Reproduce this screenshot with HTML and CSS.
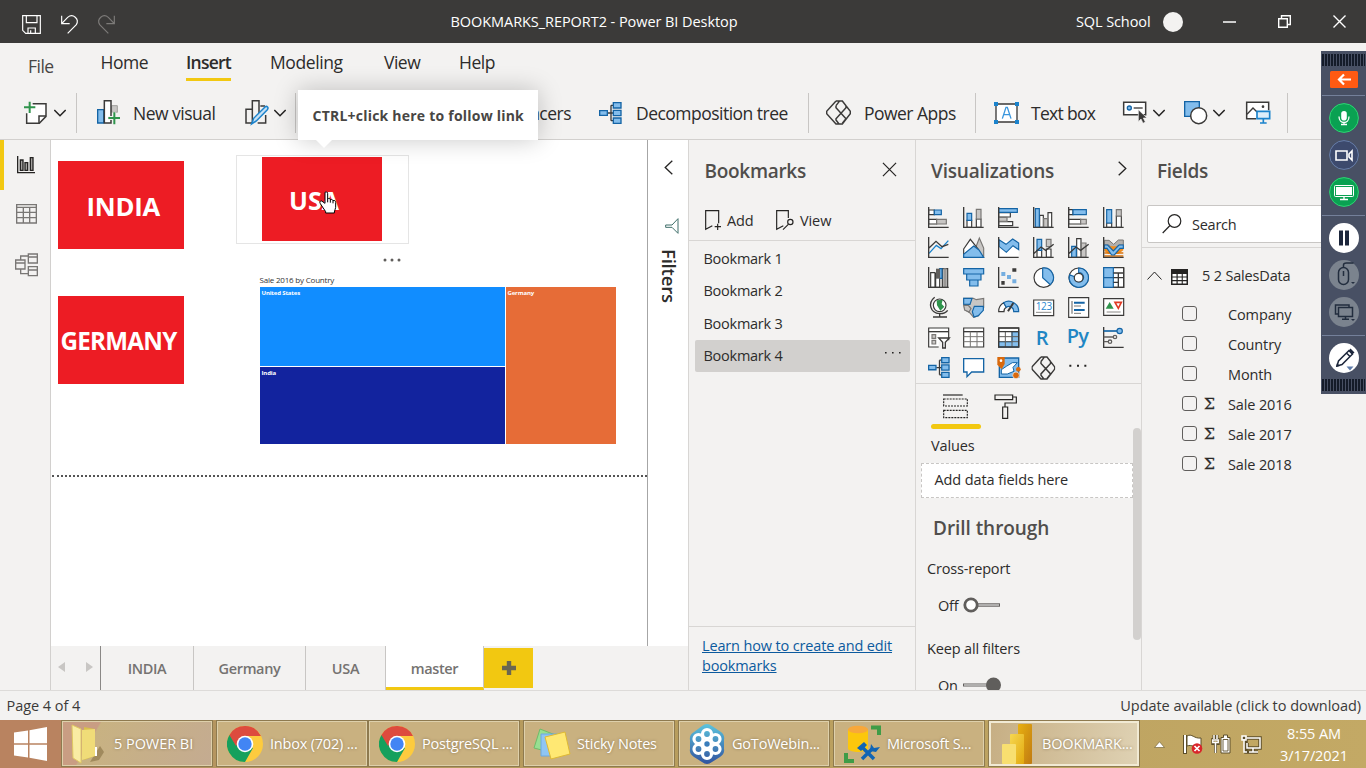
FILE: index.html
```html
<!DOCTYPE html>
<html lang="en">
<head>
<meta charset="utf-8">
<title>BOOKMARKS_REPORT2 - Power BI Desktop</title>
<link rel="stylesheet" href="styles.css">
</head>
<body>
<svg class="defs" width="0" height="0" aria-hidden="true">
  <defs>
    <symbol id="chev" viewBox="0 0 36 24"><path d="M1 3l17 17L35 3" fill="none" stroke="#252423" stroke-width="4.5"/></symbol>
    <symbol id="decomp" viewBox="0 0 69 66"><path d="M26 33h17M36 10v46M36 10h8M36 56h8" fill="none" stroke="#3b3a39" stroke-width="4"/><g fill="#83bdec" stroke="#1464a5" stroke-width="4"><path d="M2 26h23v14H2zM43 2h23v16H43zM43 25h23v16H43zM43 48h23v16H43z"/></g></symbol>
    <symbol id="papps" viewBox="0 0 75 75"><path d="M30 3L2 34v7l28 31h9M30 3h9M39 3h10l24 31v7L49 72H39M30 17v6l30 33-11 14M60 17v6L30 56v4l9 12M30 17L40 4M50 4l10 13" fill="none" stroke="#3b3a39" stroke-width="4.500"/></symbol>
    <symbol id="chrome" viewBox="0 0 36 36"><circle cx="18" cy="18" r="18" fill="#fdcb3e"/><path d="M18 18L2.4 9A18 18 0 0 0 18 36l8-14z" fill="#16a05d"/><path d="M2.4 9A18 18 0 0 1 34 10H18L9 20z" fill="#dd4b3e"/><circle cx="18" cy="18" r="8.3" fill="#fff"/><circle cx="18" cy="18" r="6.7" fill="#4285f4"/></symbol>
  </defs>
</svg>
<div class="app">
  <header class="titlebar">
    <div class="quick">
      <svg width="19" height="19" viewBox="0 0 57 57" fill="none" stroke="#fff" stroke-width="3.5"><path d="M2 2h53v53H11L2 46zM13 2v21h32V2M18 55V39h22v16M26 55V46"/></svg>
      <svg width="17" height="19" viewBox="0 0 51 57" fill="none" stroke="#fff" stroke-width="3.5"><path d="M2 2v24h24M2 26L20 7C36-6 56 12 46 29L20 55"/></svg>
      <svg width="17" height="19" viewBox="0 0 51 57" fill="none" stroke="#7d7b79" stroke-width="3.5"><path d="M49 2v24H25M49 26L31 7C15-6-5 12 5 29l26 26"/></svg>
    </div>
    <div class="title">BOOKMARKS_REPORT2 - Power BI Desktop</div>
    <div class="user">SQL School</div>
    <div class="avatar"></div>
    <svg class="wc wc-min" width="13" height="13" viewBox="0 0 13 13"><path d="M0 7h13" stroke="#fff" stroke-width="1.5"/></svg>
    <svg class="wc wc-max" width="13" height="13" viewBox="0 0 13 13" fill="none" stroke="#fff" stroke-width="1.4"><path d="M.7 3.7h8.6v8.6H.7zM3.5 3.5V.7h8.8v8.8H9.5"/></svg>
    <svg class="wc wc-close" width="13" height="13" viewBox="0 0 13 13"><path d="M.5.5l12 12M12.500.5L.5 12.5" stroke="#fff" stroke-width="1.4"/></svg>
  </header>

  <nav class="menu">
    <span class="m-file">File</span><span class="m-home">Home</span><span class="m-insert">Insert</span><span class="m-model">Modeling</span><span class="m-view">View</span><span>Help</span>
  </nav>

  <div class="ribbon">
    <svg width="24" height="24" viewBox="0 0 72 72"><path d="M26 8h40v38L46 67H8V37" fill="#fff" stroke="#3b3a39" stroke-width="4.5"/><path d="M66 45H45v22" fill="none" stroke="#3b3a39" stroke-width="4.5"/><path d="M0 19h34M17 2v34" stroke="#2f944c" stroke-width="6"/></svg>
    <svg width="12" height="8"><use href="#chev"/></svg>
    <i class="sep"></i>
    <svg width="24" height="25" viewBox="0 0 72 75"><path d="M44 17h17v20H44z" fill="#c8c6c4" stroke="#a19f9d" stroke-width="3"/><path d="M2 29h18v40H2z" fill="#83bdec" stroke="#1464a5" stroke-width="4"/><path d="M22 2h20v67H22z" fill="#fff" stroke="#3b3a39" stroke-width="4.500"/><path d="M34 54h35M52 37v36" stroke="#f3f2f1" stroke-width="12"/><path d="M34 54h35M52 37v36" stroke="#2f944c" stroke-width="6"/></svg>
    <span>New visual</span>
    <svg width="24" height="25" viewBox="0 0 72 75"><path d="M22 28H3v41h18M22 69V2h20v50M46 18h14M62 45v24H38" fill="none" stroke="#3b3a39" stroke-width="4.500"/><path d="M20 72l6-17 34-34c6-5 12 2 7 8L34 63z" fill="#c7e0f4" stroke="#1b83cc" stroke-width="4.500"/></svg>
    <svg width="12" height="8"><use href="#chev"/></svg>
    <i class="sep"></i>
    <span class="r-key">Key influencers</span>
    <svg width="23" height="22"><use href="#decomp"/></svg>
    <span>Decomposition tree</span>
    <i class="sep"></i>
    <svg width="25" height="25"><use href="#papps"/></svg>
    <span>Power Apps</span>
    <i class="sep"></i>
    <svg width="25" height="22" viewBox="0 0 75 66"><path d="M6 6h63v54H6z" fill="#fff" stroke="#3b3a39" stroke-width="4"/><path d="M25 50l11-34h4l11 34M29 38h18" fill="none" stroke="#3a96dd" stroke-width="4"/><path d="M0 0h12v12H0zM63 0h12v12H63zM0 54h12v12H0zM63 54h12v12H63z" fill="#1b83cc"/></svg>
    <span class="r-text">Text box</span>
    <svg width="24" height="23" viewBox="0 0 72 69"><path d="M2 4h66v37H2z" fill="#fff" stroke="#3b3a39" stroke-width="4.500"/><circle cx="19" cy="21" r="6" fill="#83bdec" stroke="#1464a5" stroke-width="4"/><path d="M32 21h27" stroke="#3b3a39" stroke-width="4"/><path d="M46 26v36l8-8 6 13 7-4-6-12h11z" fill="#3b3a39" stroke="#f3f2f1" stroke-width="2"/></svg>
    <svg width="12" height="8"><use href="#chev"/></svg>
    <svg width="24" height="24" viewBox="0 0 72 72"><path d="M2 2h44v44H2z" fill="#83bdec" stroke="#1464a5" stroke-width="4"/><circle cx="44" cy="44" r="24" fill="#fff" stroke="#3b3a39" stroke-width="4.500"/></svg>
    <svg width="12" height="8"><use href="#chev"/></svg>
    <svg width="25" height="23" viewBox="0 0 75 69"><path d="M30 53H2V4h66v24" fill="#fff" stroke="#3b3a39" stroke-width="4.500"/><path d="M3 40l18-19 12 12" fill="none" stroke="#3b3a39" stroke-width="4"/><circle cx="51" cy="17" r="4" fill="#3b3a39"/><path d="M33 31h38v22H33zM52 53v12M42 66h20" fill="#dceefa" stroke="#1b83cc" stroke-width="5"/></svg>
    <i class="sep"></i>
  </div>

  <main class="work">
    <aside class="rail">
      <i class="rail-mark"></i>
      <svg width="18" height="18" viewBox="0 0 54 54" fill="#a19f9d" stroke="#252423" stroke-width="4"><path d="M2 0v50h52" fill="none"/><path d="M10 12h8v31h-8zM24 20h8v23h-8zM40 5h8v38h-8z"/></svg>
      <svg width="21" height="20" viewBox="0 0 63 60" fill="none" stroke="#797775" stroke-width="4"><path d="M2 2h59v55H2zM2 10h59M2 25h59M2 41h59M22 10v47M41 10v47"/></svg>
      <svg width="23" height="24" viewBox="0 0 69 72" fill="none" stroke="#797775" stroke-width="4"><path d="M2 21h28v27H2zM2 30h28M40 3h27v27H40zM40 12h27M40 41h27v27H40zM40 51h27M17 21v-12h23M17 48v14h23"/></svg>
    </aside>

    <section class="stage">
      <div class="stage-top">
        <div class="canvas">
          <div class="tile t-india">INDIA</div>
          <div class="tile t-germany">GERMANY</div>
          <div class="frame"><div class="tile t-usa">USA</div></div>
          <svg class="more" width="18" height="4" viewBox="0 0 18 4" fill="#605e5c"><circle cx="2" cy="2" r="1.500"/><circle cx="9" cy="2" r="1.500"/><circle cx="16" cy="2" r="1.500"/></svg>
          <div class="chart">
            <div class="chart-title">Sale 2016 by Country</div>
            <div class="treemap"><div class="tm-us">United States</div><div class="tm-de">Germany</div><div class="tm-in">India</div></div>
          </div>
          <div class="fold"></div>
          <svg class="hand" width="18" height="23" viewBox="0 0 54 69"><path d="M18 4c4-3 8-1 8 4v16c3-3 7-2 8 2 4-2 7 0 8 3 5-2 8 1 8 5v15c0 6-4 9-4 14v3H20v-4L4 38c-3-4-1-9 4-8l10 7z" fill="#fff" stroke="#000" stroke-width="3"/><path d="M26 24v10M34 26v9M42 29v8" stroke="#000" stroke-width="3"/></svg>
        </div>
        <aside class="filters">
          <svg width="9" height="15" viewBox="0 0 9 15" fill="none" stroke="#252423" stroke-width="1.3"><path d="M8.300.7L1.200 7.500l7.100 6.800"/></svg>
          <svg class="funnel" width="14" height="16" viewBox="0 0 42 48" fill="none" stroke="#3f6f6a" stroke-width="3"><path d="M39 2v44L21 28H2v-7h19z"/></svg>
          <span>Filters</span>
        </aside>
      </div>
      <footer class="tabs">
        <div class="tab-nav"><svg width="7" height="10" viewBox="0 0 7 10"><path d="M7 0v10L0 5z" fill="#c8c6c4"/></svg><svg width="7" height="10" viewBox="0 0 7 10"><path d="M0 0v10l7-5z" fill="#c8c6c4"/></svg></div>
        <div class="tab w1">INDIA</div><div class="tab w2">Germany</div><div class="tab w3">USA</div><div class="tab w4 on">master</div>
        <div class="plus"><svg width="14" height="14" viewBox="0 0 14 14"><path d="M7 0v14M0 7h14" stroke="#6b6650" stroke-width="4.400"/></svg></div>
      </footer>
    </section>

    <aside class="bookmarks">
      <div class="head"><h2>Bookmarks</h2><svg width="15" height="15" viewBox="0 0 16 16"><path d="M1 1l14 14M15 1L1 15" stroke="#252423" stroke-width="1.3"/></svg></div>
      <div class="actions">
        <svg width="16" height="21" viewBox="0 0 48 63" fill="none" stroke="#252423" stroke-width="3.500"><path d="M41 40V2H2v56l20-11M29 50h19M38 41v19"/></svg><span class="a-add">Add</span>
        <svg width="18" height="21" viewBox="0 0 54 63" fill="none" stroke="#252423" stroke-width="3.500"><path d="M37 24V2H2v56l20-11M21 59l16-16"/><circle cx="43" cy="36" r="8"/></svg><span>View</span>
      </div>
      <ul>
        <li>Bookmark 1</li><li>Bookmark 2</li><li>Bookmark 3</li>
        <li class="sel">Bookmark 4<svg width="16" height="2" viewBox="0 0 16 2" fill="#252423"><path d="M0 0h1.600v1.600H0zM7 0h1.600v1.600H7zM14 0h1.600v1.600H14z"/></svg></li>
      </ul>
      <div class="learn"><a>Learn how to create and edit<br>bookmarks</a></div>
    </aside>

    <aside class="viz">
      <div class="head"><h2>Visualizations</h2><svg width="9" height="15" viewBox="0 0 9 15" fill="none" stroke="#252423" stroke-width="1.300"><path d="M.7.700l7.100 6.800L.7 14.300"/></svg></div>
      <div class="icons">
        <svg viewBox="0 0 66 66"><path class="w" d="M2 9h17v14H2zM2 37h24v14H2z"/><path class="b" d="M19 9h21v14H19z"/><path class="g" d="M26 37h29v14H26z"/><path class="ax" d="M2 0v61h60"/></svg>
        <svg viewBox="0 0 66 66"><path class="w" d="M12 40h14v21H12zM40 36h14v25H40z"/><path class="b" d="M12 19h14v21H12z"/><path class="g" d="M40 7h14v29H40z"/><path class="ax" d="M2 0v61h60"/></svg>
        <svg viewBox="0 0 66 66"><path class="w" d="M2 17h35v13H2zM2 44h42v12H2z"/><path class="g" d="M2 31h25v12H2z"/><path class="b" d="M2 5h56v11H2z"/><path class="ax" d="M2 0v61h60"/></svg>
        <svg viewBox="0 0 66 66"><path class="w" d="M20 25h11v36H20zM45 17h11v44H45z"/><path class="g" d="M32 35h12v26H32z"/><path class="b" d="M7 5h12v56H7z"/><path class="ax" d="M2 0v61h60"/></svg>
        <svg viewBox="0 0 66 66"><path class="w" d="M2 8h13v15H2zM2 37h36v14H2z"/><path class="b" d="M15 8h40v15H15z"/><path class="g" d="M38 37h17v14H38z"/><path class="ax" d="M2 0v61h60"/></svg>
        <svg viewBox="0 0 66 66"><path class="w" d="M11 48h15v13H11zM40 27h15v34H40z"/><path class="b" d="M11 8h15v40H11z"/><path class="g" d="M40 8h15v19H40z"/><path class="ax" d="M2 0v61h60"/></svg>

        <svg viewBox="0 0 66 66"><path class="bl" d="M3 49l22-24 14 10 22-24"/><path class="ax" d="M3 33l21-20 18 16 19-7M2 0v61h60"/></svg>
        <svg viewBox="0 0 66 66"><path class="g" d="M27 61L49 3l13 30v28z"/><path class="w" d="M2 36L22 7l24 30-18 24H2z"/><path class="b" d="M2 61V52l30-25 16 12 14 22z"/></svg>
        <svg viewBox="0 0 66 66"><path d="M3 8v53h59V20z" fill="#fff"/><path class="b" d="M3 8l21 14L44 6l18 12v20L45 26 25 46 3 28z"/><path class="ax" d="M2 0v61h60"/></svg>
        <svg viewBox="0 0 66 66"><path class="w" d="M12 40h14v21H12zM40 36h14v25H40z"/><path class="b" d="M12 7h14v33H12z"/><path class="g" d="M40 7h14v22H40z"/><path class="ax" d="M2 50l22-20 14 10 24-18M2 0v61h60"/></svg>
        <svg viewBox="0 0 66 66"><path class="w" d="M26 5h13v56H26z"/><path class="b" d="M11 28h14v33H11z"/><path class="g" d="M40 18h14v43H40z"/><path class="ax" d="M2 50l22-20 14 10 24-18M2 0v61h60"/></svg>
        <svg viewBox="0 0 66 66"><path d="M4 10h14l14 12 14-13h15v15H49L32 35 16 24H4z" fill="#b3b0ad" stroke="#797775" stroke-width="3"/><path d="M4 28h57v12L46 51H16L4 42z" fill="#f08c1e"/><path d="M4 48h57M4 57h57" stroke="#d9730d" stroke-width="5"/><path class="b" d="M4 24h10l17 18 17-18h13v10H51L34 54h-8L12 34H4z"/><path class="ax" d="M2 0v61h60"/></svg>

        <svg viewBox="0 0 66 66"><path class="w" d="M8 17h13v44H8zM23 20h12v41H23zM43 5h16v56H43z"/><path class="b" d="M35 5h7v29h-7z"/><path d="M24 5h12v30H24z" fill="#605e5c"/><path class="g" d="M48 5h6v56h-6z"/><path class="ax" d="M2 0v61h60"/></svg>
        <svg viewBox="0 0 66 66"><path class="b" d="M2 5h60v16H2zM11 21h43v18H11zM20 39h25v18H20z"/></svg>
        <svg viewBox="0 0 66 66"><path d="M10 15h12v12H10zM27 24h12v12H27zM43 37h12v12H43z" fill="#75aee0"/><path d="M43 4h12v10H43zM10 42h10v11H10z" fill="#3b3a39"/><path class="ax" d="M2 0v61h60"/></svg>
        <svg viewBox="0 0 66 66"><circle class="w" cx="32" cy="32" r="29"/><path class="b" d="M29 3a29 29 0 0 1 23 50L29 32z"/></svg>
        <svg viewBox="0 0 66 66"><circle class="w" cx="32" cy="32" r="29"/><path class="b" fill-rule="evenodd" d="M32 3a29 29 0 1 1-27 20l14 6a14 14 0 1 0 13-12z"/><circle class="w" cx="32" cy="32" r="13"/></svg>
        <svg viewBox="0 0 66 66"><path class="w" d="M2 2h60v59H2z"/><path class="b" d="M2 2h29v30H2zM2 32h29v29H2z"/><path class="ax" d="M31 18h31M31 32h31M31 46h15M46 18v43M31 61H62V2"/></svg>

        <svg viewBox="0 0 66 66"><circle class="w" cx="35" cy="25" r="19"/><path d="M26 10l18-2-3 13 8 8-12 12-10-16z" fill="#2f944c"/><path class="ax" d="M20 1C-1 18 6 48 35 50c12 0 20-4 24-10M35 50v10M15 60h42"/></svg>
        <svg viewBox="0 0 66 66"><path class="g" d="M2 4h29l9 4 22-4v28L46 56l-14 5-12-14L5 37z"/><path class="b" d="M2 4h25l-6 18L2 22zM34 28h27v12L46 56 33 60l-5-16z"/><path class="g" d="M2 25h14l8 10-6 10L5 39z"/></svg>
        <svg viewBox="0 0 66 66"><path class="w" d="M2 44a30 30 0 0 1 15-27l8 14a14 14 0 0 0-7 13z"/><path class="b" d="M17 17a30 30 0 0 1 45 27H47a14 14 0 0 0-22-13z"/><path d="M46 18L30 43" stroke="#3b3a39" stroke-width="6"/></svg>
        <svg viewBox="0 0 66 66"><path class="w" d="M2 9h60v47H2z"/><path d="M9 46h46" stroke="#8a8886" stroke-width="3"/><text class="num" x="8" y="40">123</text></svg>
        <svg viewBox="0 0 66 66"><path class="w" d="M2 2h60v59H2z"/><path class="g" d="M12 12v38"/><path d="M18 17h32M18 39h32" stroke="#1464a5" stroke-width="6"/><path d="M18 27h21M18 49h21" stroke="#797775" stroke-width="3"/></svg>
        <svg viewBox="0 0 66 66"><path class="w" d="M2 5h60v50H2z"/><path d="M8 35L20 15l12 20z" fill="#2f944c"/><path d="M36 16h19L46 34z" fill="none" stroke="#e03b24" stroke-width="5"/><path d="M11 45h42" stroke="#8a8886" stroke-width="3"/></svg>

        <svg viewBox="0 0 66 66"><path class="w" d="M2 3h60v57H2z"/><path class="ax" d="M2 14h60"/><path class="g" d="M12 23h11v11H12zM12 40h11v11H12z"/><path d="M60 40h6v26H32V44z" fill="#f3f2f1"/><path d="M32 33h32L52 46v17h-8V46z" fill="#fff" stroke="#3b3a39" stroke-width="4"/></svg>
        <svg viewBox="0 0 66 66"><path class="w" d="M2 3h60v57H2z"/><path class="ax" d="M2 14h60"/><path d="M2 29h60M2 44h60M22 14v46M42 14v46" stroke="#797775" stroke-width="3"/></svg>
        <svg viewBox="0 0 66 66"><path class="w" d="M2 3h60v57H2z"/><path class="b" d="M42 14h20v46H2V44h40z"/><path d="M2 29h60M2 44h60M22 14v46M42 14v46" stroke="#605e5c" stroke-width="3"/><path class="ax" d="M2 14h60M2 3h60v57H2z" /></svg>
        <svg viewBox="0 0 66 66"><text class="rpy" x="8" y="53">R</text></svg>
        <svg viewBox="0 0 66 66"><text class="rpy" x="-4" y="48">Py</text></svg>
        <svg viewBox="0 0 66 66"><path class="ax" d="M2 0v61h60"/><path d="M2 12h41" stroke="#1464a5" stroke-width="5"/><path d="M2 30h28M2 44h15" stroke="#605e5c" stroke-width="4"/><circle class="b" cx="50" cy="12" r="8"/><g fill="#fff" stroke="#605e5c" stroke-width="4"><circle cx="36" cy="30" r="5"/><circle cx="21" cy="44" r="5"/></g></svg>

        <svg viewBox="0 0 69 69"><use href="#decomp" width="69" height="66"/></svg>
        <svg viewBox="0 0 66 66"><path d="M2 5h60v40H26L12 59V45H2z" fill="#fff" stroke="#1464a5" stroke-width="4"/></svg>
        <svg viewBox="0 0 66 66"><path d="M4 3h58v58H4z" fill="#83bdec" stroke="#1464a5" stroke-width="4"/><path d="M25 28l18-11 15 0-13 14 3 12-20 8H10V38z" fill="#fff" stroke="#1464a5" stroke-width="3"/><path d="M-2 0h22v21L11 37-2 23z" fill="#d9690c"/><circle cx="9" cy="11" r="4" fill="#fff"/><circle cx="54" cy="55" r="10" fill="#d9690c" stroke="#f3f2f1" stroke-width="2"/><circle cx="61" cy="37" r="7" fill="#d9690c"/></svg>
        <svg viewBox="5 3 69 69"><use href="#papps" width="75" height="75"/></svg>
        <svg viewBox="0 0 66 66"><path d="M4 23h6v6H4zM27 23h6v6h-6zM49 23h6v6h-6z" fill="#252423"/></svg>
      </div>
      <div class="format">
        <div class="f-tabs">
          <svg width="25" height="26" viewBox="0 0 75 78" fill="none" stroke="#252423" stroke-width="3.500"><path d="M0 3h59"/><path d="M2 15h71v21H2zM2 49h71v22H2z" stroke-dasharray="6 3"/></svg>
          <svg width="24" height="26" viewBox="0 0 72 78" fill="none" stroke="#252423" stroke-width="3.500"><path d="M3 3h53v14H3zM56 9h11v18H33v11M26 39h15v34H26z"/></svg>
        </div>
        <i class="f-mark"></i>
        <div class="lbl l-values">Values</div>
        <div class="drop">Add data fields here</div>
        <h3>Drill through</h3>
        <div class="lbl l-cross">Cross-report</div>
        <div class="tog"><span>Off</span><svg width="38" height="16" viewBox="0 0 38 16"><path d="M14 8h23" stroke="#605e5c" stroke-width="3.400"/><path d="M14 8h22" stroke="#fff" stroke-width="1"/><circle cx="8" cy="8" r="6.200" fill="#fff" stroke="#605e5c" stroke-width="2.800"/></svg></div>
        <div class="lbl l-keep">Keep all filters</div>
        <div class="tog"><span>On</span><svg width="38" height="16" viewBox="0 0 38 16"><path d="M0 8h26" stroke="#605e5c" stroke-width="3"/><path d="M1 8h25" stroke="#fff" stroke-width="1"/><circle cx="30.500" cy="8" r="7.500" fill="#605e5c"/></svg></div>
        <i class="scroll"></i>
      </div>
    </aside>

    <aside class="fields">
      <h2>Fields</h2>
      <div class="search"><svg width="20" height="20" viewBox="0 0 20 20" fill="none" stroke="#252423" stroke-width="1.200"><circle cx="12.500" cy="7" r="6.300"/><path d="M8 11.500L.7 19"/></svg>Search</div>
      <div class="table"><svg width="15" height="9" viewBox="0 0 15 9"><path d="M.5 8.500l7-7.500 7 7.500" fill="none" stroke="#252423"/></svg><svg class="grid" width="17" height="16" viewBox="0 0 17 16"><path d="M0 0h17v16H0z" fill="#252423"/><path d="M1.500 5h4v2.400h-4zM6.700 5h4v2.400h-4zM11.800 5h3.700v2.400h-3.700zM1.500 8.600h4V11h-4zM6.700 8.600h4V11h-4zM11.800 8.600h3.700V11h-3.700zM1.500 12.200h4v2.300h-4zM6.700 12.200h4v2.300h-4zM11.800 12.200h3.700v2.300h-3.700z" fill="#fff"/></svg>5 2 SalesData</div>
      <div class="row"><i></i><b></b>Company</div>
      <div class="row"><i></i><b></b>Country</div>
      <div class="row"><i></i><b></b>Month</div>
      <div class="row"><i></i><b>Σ</b>Sale 2016</div>
      <div class="row"><i></i><b>Σ</b>Sale 2017</div>
      <div class="row"><i></i><b>Σ</b>Sale 2018</div>
    </aside>
  </main>

  <div class="status"><span>Page 4 of 4</span><span class="upd">Update available (click to download)</span></div>

  <div class="taskbar">
    <div class="start"><svg width="33" height="34" viewBox="0 0 33 34" fill="#fff"><path d="M0 5.500l14-2v12.700H0zM15.500 3.200L33 0v16.200H15.500zM0 17.700h14v12.700l-14-2zM15.500 17.700H33V34l-17.500-3.200z"/></svg></div>
    <div class="task first"><svg width="34" height="38" viewBox="0 0 34 38"><path d="M18 37l10-16 4 6-5 8z" fill="#7a6336" opacity=".5"/><path d="M12 2l11 2v27l-11 4z" fill="#d9bf4c"/><path d="M10 5l13-1v27l-13 4z" fill="#f0dc78"/><path d="M0 0l9 4v34L1 33z" fill="#f9eca3" stroke="#e0c862"/><path d="M24 22v9" stroke="#fff" stroke-width="2"/></svg><span>5 POWER BI</span></div>
    <div class="task c1"><svg width="36" height="36"><use href="#chrome"/></svg><span>Inbox (702) ...</span></div>
    <div class="task"><svg width="36" height="36"><use href="#chrome"/></svg><span>PostgreSQL ...</span></div>
    <div class="task"><svg width="36" height="32" viewBox="0 0 36 32"><path d="M6 1l18 7-5 17-19-5z" fill="#98df91" stroke="#6fbc69"/><path d="M7 6h19v22H7z" fill="#8fc5f4" stroke="#6da8de"/><path d="M11 9l20-5 5 22-19 5z" fill="#ffe873" stroke="#dfb933"/></svg><span>Sticky Notes</span></div>
    <div class="task"><svg width="36" height="40" viewBox="0 0 36 40"><defs><linearGradient id="gw" x2="0" y2="1"><stop stop-color="#5cc4dd"/><stop offset="1" stop-color="#31539f"/></linearGradient></defs><path d="M13 2q5-4 10 0l9 6q4 3 3 8v9q1 5-4 8l-8 5q-5 4-10 0l-8-5q-5-3-4-8v-9q-1-5 4-8z" fill="url(#gw)"/><g fill="none" stroke="#fff" stroke-width="3.200"><circle cx="18" cy="10" r="4.500"/><circle cx="26.500" cy="15" r="4.500"/><circle cx="26.500" cy="25" r="4.500"/><circle cx="18" cy="30" r="4.500"/><circle cx="9.500" cy="25" r="4.500"/><circle cx="9.500" cy="15" r="4.500"/></g><circle cx="18" cy="20" r="5.500" fill="#fff"/><circle cx="18" cy="20" r="2.700" fill="#397dbb"/></svg><span>GoToWebin...</span></div>
    <div class="task"><svg width="36" height="38" viewBox="0 0 36 38"><path d="M4 4v20c3 4 17 4 20 0V4z" fill="#fcc70c"/><ellipse cx="14" cy="4.500" rx="10" ry="3.800" fill="#f7a83b"/><path d="M27 2.500h8V10M2 28v8h8" fill="none" stroke="#3f9c47" stroke-width="4"/><path d="M18 34l11-11M18 22l12 12" stroke="#0f64b4" stroke-width="3.500"/><path d="M13 23l7-6 3 3-6 6zM27 19l3 4 6-1-4 5-6-1z" fill="#0f64b4"/></svg><span>Microsoft S...</span></div>
    <div class="task active"><svg width="30" height="40" viewBox="0 0 30 40"><defs><linearGradient id="p1" x2="1" y2="1"><stop stop-color="#e8b010"/><stop offset="1" stop-color="#c07a12"/></linearGradient><linearGradient id="p2" x2="1" y2="1"><stop stop-color="#f6d751"/><stop offset="1" stop-color="#e2a90e"/></linearGradient></defs><rect x="16" width="14" height="40" rx="1" fill="url(#p1)"/><rect x="8" y="10" width="14" height="30" rx="1" fill="url(#p2)"/><rect y="20" width="14" height="20" rx="1" fill="#f8df70"/></svg><span>BOOKMARK...</span></div>
    <div class="tray">
      <svg width="11" height="7" viewBox="0 0 11 7"><path d="M.5 6.500L5.500.7l5 5.800z" fill="#fff" stroke="#77673c" stroke-width=".7"/></svg>
      <svg class="tr1" width="20" height="20" viewBox="0 0 20 20"><path d="M2 20V1" stroke="#5c4e2a" stroke-width="4"/><path d="M2 19V1" stroke="#fff" stroke-width="2"/><path d="M4 2c5-3 7 3 14 2v9c-7 1-9-3-14-1z" fill="#fff" stroke="#5c4e2a"/><circle cx="14" cy="14.500" r="5.300" fill="#d9252a"/><path d="M11.500 12l5 5M16.500 12l-5 5" stroke="#fff" stroke-width="1.700"/></svg>
      <svg class="tr2" width="19" height="20" viewBox="0 0 19 20" fill="none"><path d="M2 1v4M5 1v4M.8 5.500h5.400v4H.8zM3.500 9v10" stroke="#5c4e2a" stroke-width="3"/><path d="M2 1v4M5 1v4M.8 6h5.400v2.500H.8zM3.500 9v10" stroke="#fff" stroke-width="1.500"/><path d="M11.500 1h4v2.500h2.500V19H9V3.500h2.500z" fill="#fff" stroke="#5c4e2a"/><path d="M11 5.500h5v11.500h-5z" stroke="#5c4e2a" stroke-width=".9"/></svg>
      <svg class="tr3" width="20" height="20" viewBox="0 0 20 20" fill="none"><path d="M6 4h13v10H6V9M12 14v4M8 18h9M3 2v3l2 2v11h3" stroke="#5c4e2a" stroke-width="3.500"/><path d="M6 4h13v10H6V9M12 14v4M8 18h9M3 5v13h3M1 2h4v4H1z" stroke="#fff" stroke-width="1.500"/></svg>
    </div>
    <div class="clock">8:55 AM<br>3/17/2021</div>
  </div>

  <div class="tip">CTRL+click here to follow link</div>

  <div class="dock">
    <i class="grip"></i>
    <svg class="back" width="28" height="17" viewBox="0 0 28 17"><rect width="28" height="17" rx="1.500" fill="#ff5a12"/><path d="M21 8.500H10M14 3.500L9 8.500l5 5" fill="none" stroke="#fff" stroke-width="2.200"/></svg>
    <hr class="h1">
    <svg width="30" height="30" viewBox="0 0 30 30"><circle cx="15" cy="15" r="14.400" fill="#0aa152" stroke="#2ed573"/><rect x="12.200" y="8" width="5.600" height="9.500" rx="2.800" fill="#fff"/><path d="M10 13.500c0 8 10 8 10 0M15 19.500v2M12 21.500h6" fill="none" stroke="#fff" stroke-width="1.300"/></svg>
    <svg class="g1" width="30" height="30" viewBox="0 0 30 30"><circle cx="15" cy="15" r="14.400" fill="#3d4a6d" stroke="#677ea9"/><path d="M7 11h11v9H7zM20 14l3-3v9l-3-3z" fill="none" stroke="#fff" stroke-width="1.600"/></svg>
    <svg class="g2" width="30" height="30" viewBox="0 0 30 30"><circle cx="15" cy="15" r="14.400" fill="#0aa152" stroke="#2ed573"/><rect x="5.500" y="8.500" width="19" height="11" rx="1" fill="none" stroke="#fff"/><path d="M7 10h16v8H7z" fill="#fff"/><path d="M15 19v3M11 22.500h8" stroke="#fff" stroke-width="1.400"/></svg>
    <hr class="h2">
    <svg width="30" height="30" viewBox="0 0 30 30"><circle cx="15" cy="15" r="15" fill="#fff"/><path d="M10 7.500h4v15h-4zM16 7.500h4v15h-4z" fill="#1c263b"/></svg>
    <svg class="g3" width="30" height="30" viewBox="0 0 30 30"><circle cx="15" cy="15" r="15" fill="#7b838e"/><rect x="9.500" y="7.500" width="10" height="17" rx="5" fill="none" stroke="#222d3e" stroke-width="1.500"/><path d="M14.500 7V5q0-2 3-2h7M14.500 11v5" stroke="#222d3e" stroke-width="1.500" fill="none"/><path d="M22 22h4l-2 2z" fill="#222d3e"/></svg>
    <svg class="g4" width="30" height="30" viewBox="0 0 30 30"><circle cx="15" cy="15" r="15" fill="#7b838e"/><path d="M9.500 17H6.500V8H20v2M9.500 10.500h14v9h-14zM16.500 20v2M13 22.300h7" fill="none" stroke="#222d3e" stroke-width="1.500"/><path d="M22 22h4l-2 2z" fill="#222d3e"/></svg>
    <hr class="h3">
    <svg width="30" height="30" viewBox="0 0 30 30"><circle cx="15" cy="15" r="15" fill="#fff"/><path d="M8 23l1.500-5L20 7.500l3.500 3.500L13 21.500zM17.500 10l3.500 3.500" fill="none" stroke="#1c263b" stroke-width="1.500"/><path d="M19.500 8l2-2.500 4 4L23 11.500zM7 24l1-4 3 3z" fill="#1c263b"/><path d="M17.500 23.500h7l-3.500 4z" fill="#5d7baa"/></svg>
    <i class="grip bottom"></i>
  </div>
</div>
</body>
</html>
```
FILE: styles.css
```css
* { box-sizing: border-box; }
html, body { margin: 0; }
body { width: 1366px; height: 768px; overflow: hidden; font-family: "Open Sans", "Noto Sans", sans-serif; font-size: 14.5px; letter-spacing: -0.25px; color: #2d2c2b; }
svg { display: block; flex: none; overflow: visible; }
h2, h3 { margin: 0; font-size: 19px; font-weight: 600; line-height: 26px; letter-spacing: -0.3px; color: #504e4c; }
.defs { position: absolute; }
.app { position: relative; width: 1366px; height: 768px; display: flex; flex-direction: column; background: #f3f2f1; overflow: hidden; white-space: nowrap; }

.titlebar { height: 43px; flex: none; background: #3b3a39; color: #fff; display: flex; align-items: center; }
.quick { display: flex; gap: 20px; padding: 6px 0 0 22px; width: 450.500px; }
.title { width: 625.500px; letter-spacing: -0.06px; }
.user { width: 87px; letter-spacing: -0.1px; }
.avatar { width: 20px; height: 20px; border-radius: 50%; background: #f3f2f1; }
.wc-min { margin-left: 40px; }
.wc-max { margin-left: 42px; }
.wc-close { margin-left: 42px; }

.menu { height: 43px; flex: none; display: flex; font-size: 17.5px; letter-spacing: -0.5px; line-height: 24px; padding: 7px 0 0 28px; }
.menu span { height: 31px; }
.m-file { width: 72.500px; padding-top: 4px; color: #484644; }
.m-home { width: 85.500px; }
.m-insert { width: 45px; margin-right: 39px; border-bottom: 3px solid #f2c811; font-weight: 600; letter-spacing: -0.75px; }
.m-model { width: 114px; letter-spacing: -0.4px; }
.m-view { width: 75px; }

.ribbon { height: 54px; flex: none; display: grid; grid-template-columns: 30px 22px 21px 36px 112px 29px 21px 157px 147px 37px 172px 18px 38px 111px 19px 37px 92px 30px 31px 29px 33px 41px 1px; padding: 0 0 0 24px; align-items: center; font-size: 17.500px; letter-spacing: -0.52px; border-bottom: 1px solid #d2d0ce; }
.ribbon .sep { width: 1px; height: 40px; background: #c8c6c4; }
.r-key { text-align: right; padding-right: 28px; }
.r-text { letter-spacing: -0.7px; }

.work { height: 550px; flex: none; display: flex; }
.rail { width: 51px; position: relative; border-right: 1px solid #d2d0ce; display: flex; flex-direction: column; align-items: center; gap: 30px; padding-top: 16px; padding-left: 2px; }
.rail svg:last-child { margin-top: -1px; }
.rail-mark { position: absolute; left: 0; top: 0; width: 4px; height: 50px; background: #f2c811; }
.stage { width: 637px; display: flex; flex-direction: column; }
.stage-top { height: 506px; display: flex; background: #fff; }
.canvas { width: 597px; position: relative; border-right: 1px solid #a6a6a6; }
.tile { display: flex; align-items: center; background: #ed1c24; color: #fff; font-weight: 700; }
.t-india { position: absolute; left: 7px; top: 21px; width: 126px; height: 88px; padding: 2px 0 0 28.500px; font-size: 25.700px; letter-spacing: -0.2px; }
.t-germany { position: absolute; left: 7px; top: 156px; width: 126px; height: 88px; padding: 0 0 0 2.500px; font-size: 24.200px; letter-spacing: -0.75px; }
.frame { position: absolute; left: 185px; top: 15px; width: 173px; height: 89px; border: 1px solid #e5e5e5; padding: 1px 0 0 25px; }
.t-usa { width: 120px; height: 84px; padding: 1px 0 0 27px; font-size: 25px; letter-spacing: 0; }
.more { position: absolute; left: 332px; top: 118px; }
.hand { position: absolute; left: 268px; top: 51px; }
.chart { position: absolute; left: 208.500px; top: 132.500px; width: 356px; }
.chart-title { font-size: 8px; line-height: 13px; height: 14px; letter-spacing: -0.2px; color: #333; }
.treemap { height: 157px; display: grid; grid-template: 79px 77px / 245px 110px; gap: 1px; color: #fff; font-size: 6px; font-weight: 700; line-height: 8px; letter-spacing: -0.15px; }
.treemap div { padding: 2px 2px; }
.tm-us { background: #118dff; }
.tm-in { background: #12239e; }
.tm-de { grid-area: 1 / 2 / 3 / 3; background: #e66c37; }
.fold { position: absolute; left: 1px; right: 0; top: 335px; border-top: 2px dotted #555; }
.filters { width: 40px; display: flex; flex-direction: column; align-items: flex-start; padding: 20px 0 0 16px; }
.funnel { margin: 43px 0 0 1px; }
.filters span { writing-mode: vertical-rl; font-size: 18.500px; font-weight: 600; letter-spacing: -0.2px; line-height: 24px; margin: 15px 0 0 -7px; }
.tabs { height: 44px; display: flex; color: #757371; font-weight: 600; letter-spacing: -0.35px; }
.tab-nav { width: 50px; border-right: 1px solid #8a8886; display: flex; gap: 21px; padding: 16px 0 0 7px; }
.tab { display: flex; align-items: center; justify-content: center; border-right: 1px solid #c8c6c4; }
.w1 { width: 93px; } .w2 { width: 112px; } .w3 { width: 80px; } .w4 { width: 98px; }
.tab.on { background: #fff; border-bottom: 3px solid #f2c811; padding-top: 3px; }
.plus { width: 49px; height: 40px; margin-top: 2px; background: #f2c811; display: flex; align-items: center; justify-content: center; }

.bookmarks { width: 228px; border-left: 1px solid #d8d6d4; border-right: 1px solid #d8d6d4; display: flex; flex-direction: column; }
.head { display: flex; justify-content: space-between; align-items: center; }
.bookmarks .head { padding: 18px 18px 0 15.500px; }
.bookmarks .head svg { margin-top: -3px; }
.actions { display: flex; align-items: center; height: 57px; padding: 16px 0 0 16px; border-bottom: 1px solid #d8d6d4; letter-spacing: -0.1px; }
.a-add { width: 49px; }
.actions span { margin-left: 6px; }
ul { list-style: none; margin: 0; padding: 1px 5px 0 6px; flex: 1; }
li { height: 32.500px; padding: 0 9px 0 8.500px; display: flex; align-items: center; justify-content: space-between; letter-spacing: -0.26px; }
li.sel { background: #d2d0ce; border-radius: 2px; }
li svg { margin-top: -6px; }
.learn { height: 64px; border-top: 1px solid #d8d6d4; padding: 9px 13px; line-height: 20px; letter-spacing: -0.15px; }
.learn a { color: #0c5a9e; text-decoration: underline; }

.viz { width: 226px; border-right: 1px solid #d8d6d4; display: flex; flex-direction: column; }
.viz .head { padding: 18px 14px 0 15px; }
.viz .head h2 { letter-spacing: -0.2px; }
.viz .head svg { margin-top: -6px; }
.icons { display: grid; grid-template-columns: repeat(6, 35px); grid-auto-rows: 30px; padding: 23px 0 0 12px; height: 200px; border-bottom: 1px solid #d8d6d4; flex: none; }
.icons svg { width: 22px; height: 22px; }
.w { fill: #fff; stroke: #3b3a39; stroke-width: 3.500; }
.b { fill: #83bdec; stroke: #1464a5; stroke-width: 3.500; }
.g { fill: #c8c6c4; stroke: #797775; stroke-width: 3.500; }
.ax { fill: none; stroke: #3b3a39; stroke-width: 4; }
.bl { fill: none; stroke: #1b83cc; stroke-width: 4; }
.num { font-size: 30px; fill: #2b88d0; letter-spacing: -1px; }
.rpy { font-size: 60px; font-weight: 600; fill: #2186c4; letter-spacing: -2px; }
.format { flex: 1; position: relative; overflow: hidden; }
.f-tabs { display: flex; gap: 26px; padding: 10px 0 0 27px; }
.f-mark { display: block; width: 50px; height: 5px; border-radius: 3px; background: #f2c811; margin: 4px 0 0 15px; }
.lbl { line-height: 20px; padding-left: 11px; letter-spacing: -0.15px; }
.l-values { padding-left: 15px; margin-top: 7px; }
.drop { width: 212px; height: 35px; margin: 7px 0 0 5px; padding: 6px 12.500px; line-height: 20px; background: #fff; border: 1px dashed #c8c6c4; letter-spacing: -0.1px; }
.format h3 { margin: 17px 0 0 17px; letter-spacing: -0.05px; }
.l-cross { margin-top: 18px; }
.l-keep { margin-top: 24px; }
.tog { display: flex; align-items: center; height: 20px; margin-top: 16px; padding-left: 22px; gap: 5px; }
.scroll { position: absolute; right: 0; top: 44px; width: 8px; height: 212px; border-radius: 4px; background: #d2d0ce; }

.fields { flex: 1; padding-top: 18px; }
.fields h2 { padding-left: 15px; }
.search { height: 38px; margin: 21px 0 0 5px; background: #fff; border: 1px solid #c8c6c4; border-radius: 2px; display: flex; align-items: center; gap: 10px; padding-left: 14px; }
.table { display: flex; align-items: center; height: 47px; margin-top: 4px; padding: 9px 0 0 5px; border-top: 1px solid #d8d6d4; letter-spacing: -0.17px; }
.table .grid { margin: 2px 14px 0 9px; }
.row { display: flex; align-items: center; height: 30px; padding-left: 40px; letter-spacing: -0.13px; }
.fields .table + .row { margin-top: 5px; }
.row i { width: 15px; height: 15px; border: 1px solid #605e5c; border-radius: 3px; margin-top: -2px; }
.row b { width: 31px; padding-left: 7px; font-weight: 400; line-height: 20px; font-family: "DejaVu Serif", serif; font-size: 15.500px; -webkit-text-stroke: .3px #252423; }

.status { height: 30px; flex: none; display: flex; justify-content: space-between; align-items: center; border-top: 1px solid #dddbd9; padding: 0 5px 0 6.500px; color: #3b3a39; letter-spacing: -0.05px; }
.taskbar { height: 48px; flex: none; display: flex; background: linear-gradient(90deg, #b98360 0, #b98360 60px, #b59660 220px, #b79c5c 600px, #c3a965 1366px); color: #fff; }
.start { width: 61px; display: flex; align-items: center; padding-left: 14px; }
.task { width: 152px; height: 47px; margin-right: 3px; border: 1px solid #8e7a4f; box-shadow: inset 0 0 0 1px #ded0ab; background: #c9b180; display: flex; align-items: center; padding-left: 10px; gap: 7px; letter-spacing: -0.2px; text-shadow: 0 0 3px #84704c; }
.task.first { background: linear-gradient(120deg, #c99d83 0 22%, #c8b282 23%, #c4ab91); gap: 8px; letter-spacing: -0.05px; }
.task.c1 { margin-right: 0; }
.task.active { background: linear-gradient(100deg, #c6ae83, #dfd2b4); box-shadow: inset 0 0 0 2px #f1ead4; padding-left: 13px; gap: 10px; letter-spacing: -0.15px; }
.tray { display: flex; align-items: center; padding-left: 11px; width: 126px; }
.tr1 { margin-left: 18px; } .tr2 { margin-left: 9px; } .tr3 { margin-left: 10px; }
.clock { width: 90px; text-align: center; line-height: 22px; padding-top: 3px; letter-spacing: -0.1px; }

.tip { position: absolute; left: 297.500px; top: 90px; width: 240.500px; height: 50px; padding: 14px 15px; font-weight: 700; font-size: 14px; line-height: 24px; letter-spacing: 0.22px; color: #484644; background: #fff; box-shadow: 0 0 24px rgba(0, 0, 0, .22); }
.tip::after { content: ""; position: absolute; left: 18.500px; top: 50px; border: 8px solid transparent; border-top-color: #fff; border-bottom: 0; }

.dock { position: absolute; left: 1321px; top: 51px; width: 45px; height: 343px; background: #485064; display: flex; flex-direction: column; align-items: center; padding-top: 3px; }
.grip { width: 43px; height: 12px; background: repeating-linear-gradient(90deg, #141b29 0 2px, #485064 2px 3px); flex: none; }
.back { margin-top: 5px; }
.dock hr { width: 43px; height: 1px; border: 0; background: #74809a; flex: none; margin: 0; }
.dock .h1 { margin: 7px 0; }
.g1, .g2 { margin-top: 7px; }
.dock .h2 { margin: 8px 0 7px; }
.g3, .g4 { margin-top: 7px; }
.dock .h3 { margin: 8px 0 7px; }
.bottom { margin-top: 6px; }
```
